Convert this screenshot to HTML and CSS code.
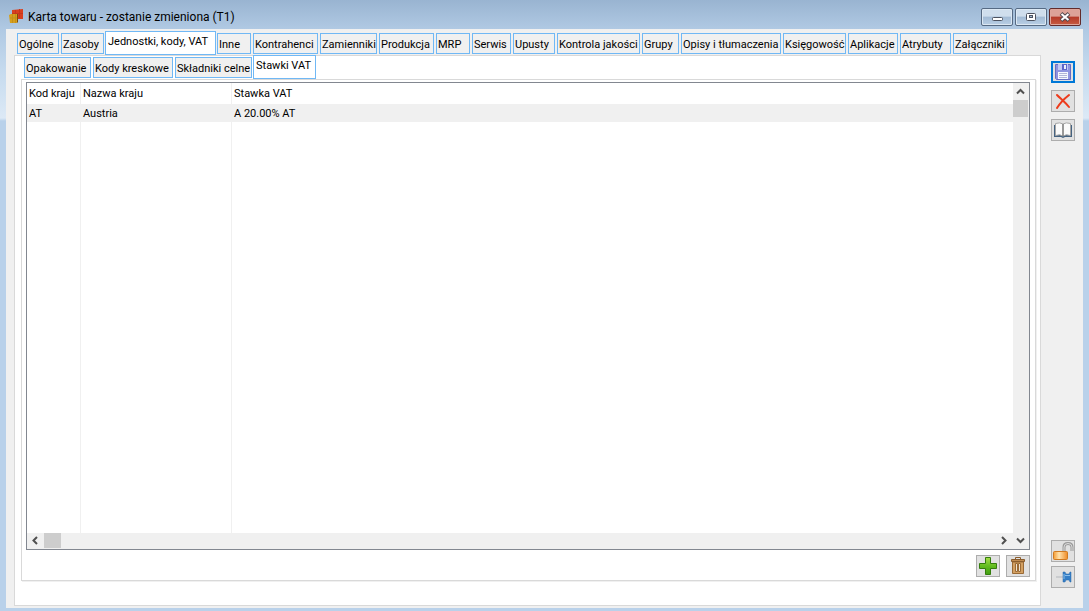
FILE: index.html
```html
<!DOCTYPE html>
<html lang="pl">
<head>
<meta charset="utf-8">
<title>Karta towaru</title>
<link rel="stylesheet" href="styles.css">
</head>
<body>
<div class="window">
  <header class="titlebar">
    <svg class="app-icon" width="16" height="16" viewBox="0 0 16 16" aria-hidden="true">
      <path d="M3 1l11-1v10H3z" fill="#d9401f"/>
      <path d="M3 4.500h11M6.500 1v8M10.500 0v9" stroke="#c5371c" fill="none"/>
      <path d="M0 6l2-1h7l-1 9H1z" fill="#d6a01d"/>
      <path d="M1 9h8M3.500 5v9M6.500 5v9" stroke="#c48f1a" fill="none"/>
      <path d="M8 5v9l1-1V5z" fill="#7d4c0b"/>
    </svg>
    <h1 class="title">Karta towaru - zostanie zmieniona (T1)</h1>
    <div class="caption-buttons">
      <button class="caption" type="button" aria-label="Minimalizuj">
        <svg width="12" height="12" viewBox="0 0 12 12"><rect x="1.500" y="6.500" width="10" height="3" rx="1" fill="#fff" stroke="#4c5260"/></svg>
      </button>
      <button class="caption" type="button" aria-label="Maksymalizuj">
        <svg width="12" height="12" viewBox="0 0 12 12"><rect x="1.500" y="2.500" width="9" height="7" rx="1" fill="#fff" stroke="#4c5260"/><rect x="4.500" y="4.500" width="3" height="2" fill="#9fb8d2" stroke="#4c5260"/></svg>
      </button>
      <button class="caption caption-close" type="button" aria-label="Zamknij">
        <svg width="12" height="12" viewBox="0 0 12 12"><path d="M2 2.500l8 7M10 2.500l-8 7" stroke="#54494f" stroke-width="4"/><path d="M2.500 3l7 6M9.500 3l-7 6" stroke="#fff" stroke-width="2"/></svg>
      </button>
    </div>
  </header>

  <main class="client">
    <div class="content">
      <nav class="tabs tabs-main" role="tablist">
        <button class="tab" type="button" role="tab">Ogólne</button>
        <button class="tab" type="button" role="tab">Zasoby</button>
        <button class="tab tab-active" type="button" role="tab" aria-selected="true">Jednostki, kody, VAT</button>
        <button class="tab" type="button" role="tab">Inne</button>
        <button class="tab" type="button" role="tab">Kontrahenci</button>
        <button class="tab" type="button" role="tab">Zamienniki</button>
        <button class="tab" type="button" role="tab">Produkcja</button>
        <button class="tab" type="button" role="tab">MRP</button>
        <button class="tab" type="button" role="tab">Serwis</button>
        <button class="tab" type="button" role="tab">Upusty</button>
        <button class="tab" type="button" role="tab">Kontrola jakości</button>
        <button class="tab" type="button" role="tab">Grupy</button>
        <button class="tab" type="button" role="tab">Opisy i tłumaczenia</button>
        <button class="tab" type="button" role="tab">Księgowość</button>
        <button class="tab" type="button" role="tab">Aplikacje</button>
        <button class="tab" type="button" role="tab">Atrybuty</button>
        <button class="tab" type="button" role="tab">Załączniki</button>
      </nav>
      <section class="page">
        <nav class="tabs tabs-sub" role="tablist">
          <button class="tab" type="button" role="tab">Opakowanie</button>
          <button class="tab" type="button" role="tab">Kody kreskowe</button>
          <button class="tab" type="button" role="tab">Składniki celne</button>
          <button class="tab tab-active" type="button" role="tab" aria-selected="true">Stawki VAT</button>
        </nav>
        <div class="subpage">
          <div class="list">
            <div class="list-view">
              <table class="rates">
                <colgroup><col class="col-code"><col class="col-name"><col></colgroup>
                <thead><tr><th>Kod kraju</th><th>Nazwa kraju</th><th>Stawka VAT</th></tr></thead>
                <tbody>
                  <tr class="selected"><td>AT</td><td>Austria</td><td>A 20.00% AT</td></tr>
                  <tr class="filler"><td></td><td></td><td></td></tr>
                </tbody>
              </table>
              <div class="scroll-x">
                <button class="arrow" type="button" aria-label="W lewo"><svg width="9" height="9" viewBox="0 0 9 9"><path d="M6 1L2.500 4.500 6 8"/></svg></button>
                <div class="thumb"></div>
                <button class="arrow arrow-end" type="button" aria-label="W prawo"><svg width="9" height="9" viewBox="0 0 9 9"><path d="M2 1l3.500 3.500L2 8"/></svg></button>
              </div>
            </div>
            <div class="scroll-y">
              <button class="arrow" type="button" aria-label="W górę"><svg width="9" height="9" viewBox="0 0 9 9"><path d="M1 6.500L4.500 3 8 6.500"/></svg></button>
              <div class="thumb"></div>
              <button class="arrow arrow-end" type="button" aria-label="W dół"><svg width="9" height="9" viewBox="0 0 9 9"><path d="M1 2.500L4.500 6 8 2.500"/></svg></button>
            </div>
          </div>
          <div class="list-actions">
            <button class="tool" type="button" aria-label="Dodaj">
              <svg width="20" height="20" viewBox="0 0 20 20">
                <defs><linearGradient id="plus" x2="0" y2="1"><stop stop-color="#a8df4b"/><stop offset=".5" stop-color="#63bd20"/><stop offset="1" stop-color="#419d13"/></linearGradient></defs>
                <path d="M7.500 1.500h5v6h6v5h-6v6h-5v-6h-6v-5h6z" fill="url(#plus)" stroke="#347d0d"/>
              </svg>
            </button>
            <button class="tool" type="button" aria-label="Usuń">
              <svg width="20" height="20" viewBox="0 0 20 20">
                <path d="M4.500 6v11.500h11V6z" fill="#d3a062" stroke="#9a6a35"/>
                <path d="M3.500 3.500h13v2h-13z" fill="#c18c50" stroke="#8a5d2e"/>
                <path d="M7.500 3V1.500h5V3" fill="none" stroke="#8a5d2e"/>
                <path d="M7.500 7.500h2v8h-2zM10.500 7.500h2v8h-2z" fill="#f0e3d0" stroke="#9a6a35"/>
              </svg>
            </button>
          </div>
        </div>
      </section>
    </div>

    <aside class="toolbar">
      <button class="tool tool-default" type="button" aria-label="Zapisz">
        <svg width="18" height="18" viewBox="0 0 18 18">
          <path d="M1.500 1.500h15v15h-14l-1-1z" fill="#8f93e0" stroke="#686cc4"/>
          <path d="M4 1h10v6H4z" fill="#c3c8f4"/><path d="M8 1h5v6H8z" fill="#5f66c8"/><path d="M10 2h2v4h-2z" fill="#eef0ff"/>
          <path d="M4 9h10v7H4z" fill="#f6f7ff"/><path d="M5 10.500h8M5 12.500h8M5 14.500h8" stroke="#b2b4d8"/>
        </svg>
      </button>
      <button class="tool" type="button" aria-label="Anuluj">
        <svg width="18" height="18" viewBox="0 0 18 18"><path d="M3 3c4 4 8 7 12 12M15 3C10 7 6 11 3 16" fill="none" stroke="#ed3b1c" stroke-width="2" stroke-linecap="round"/></svg>
      </button>
      <button class="tool" type="button" aria-label="Historia">
        <svg width="20" height="18" viewBox="0 0 20 18">
          <path d="M1 4v12h7l2 1 2-1h7V4z" fill="#456280"/>
          <path d="M2.500 2.500Q7 1 10 3v12q-3-2-7.500-.5zM17.500 2.500Q13 1 10 3v12q3-2 7.500-.5z" fill="#fafafa" stroke="#a5a5a5"/>
          <path d="M10 3v12" stroke="#777"/>
        </svg>
      </button>
      <div class="toolbar-bottom">
        <button class="tool" type="button" aria-label="Odblokuj">
          <svg width="22" height="20" viewBox="0 0 22 20">
            <defs><linearGradient id="lock"><stop stop-color="#f59c32"/><stop offset=".4" stop-color="#ffe3ae"/><stop offset="1" stop-color="#ef8b25"/></linearGradient></defs>
            <path d="M12 10V6q0-3.500 4-3.500t4 3.500v4" fill="none" stroke="#999" stroke-width="3"/>
            <path d="M12 10V6q0-3.500 4-3.500t4 3.500v4" fill="none" stroke="#ddd"/>
            <rect x="1.500" y="10.500" width="14" height="8" rx="1" fill="url(#lock)" stroke="#d07a20"/>
          </svg>
        </button>
        <button class="tool" type="button" aria-label="Przypnij">
          <svg width="20" height="18" viewBox="0 0 20 18">
            <path d="M3 9h7" stroke="#b3b7bc" stroke-width="1"/>
            <path d="M10 4h2l1 2h3l1-2h1v10h-1l-1-2h-3l-1 2h-2z" fill="#347ec6" stroke="#2868ab" stroke-width=".5"/>
            <path d="M12 7.500h5M11 6v5" stroke="#88bdea"/>
          </svg>
        </button>
      </div>
    </aside>
  </main>
</div>
</body>
</html>
```

FILE: styles.css
```css
* { box-sizing: border-box; }

body {
  margin: 0;
  font-family: Roboto, "Liberation Sans", sans-serif;
  font-size: 11px;
  line-height: 14px;
  color: #000;
}

button { font: inherit; color: inherit; margin: 0; padding: 0; }
svg { display: block; flex: none; }

.window {
  display: flex;
  flex-direction: column;
  min-height: 100vh;
  padding: 0 6px 3px;
  background: linear-gradient(#99b4d1 0, #b0c9e3 29px, #c5daee 70px, #dce9f6 118px, #b9d1ea 121px);
}

.titlebar {
  display: flex;
  align-items: center;
  height: 29px;
  padding: 5px 2px 0;
}
.app-icon { margin-left: 1px; }
.title {
  flex: 1;
  margin: 0 0 0 3px;
  font-size: 12px;
  font-weight: normal;
  line-height: 18px;
}
.caption-buttons { display: flex; gap: 2px; align-self: flex-start; margin-top: 3px; }
.caption {
  display: grid;
  place-items: center;
  width: 32px;
  height: 18px;
  border: 1px solid #566a83;
  border-radius: 2px;
  background: linear-gradient(#cfdeed 0 45%, #a2bbd5 50%, #b9cfe5);
  box-shadow: inset 0 0 0 1px #dce8f3;
}
.caption-close {
  border-color: #622b2b;
  background: linear-gradient(#dda297 0 45%, #b63a27 50%, #c65c43);
  box-shadow: inset 0 0 0 1px #dfa69b;
}

.client {
  flex: 1;
  display: flex;
  background: #f0f0f0;
}
.content {
  flex: 1;
  display: flex;
  flex-direction: column;
  min-width: 0;
  padding: 2px 0 2px 8px;
}

.tabs {
  display: grid;
  column-gap: 2px;
  align-items: start;
  height: 24px;
}
.tabs-main {
  grid-template-columns: 42px 43px 109px 34px 65px 57px 55px 34px 39px 42px 83px 37px 100px 63px 50px 51px 54px;
  padding-left: 3px;
}
.tabs-sub {
  grid-template-columns: 67px 80px 77px 61px;
  padding-left: 9px;
}
.tab {
  height: 21px;
  margin-top: 2px;
  padding: 2px 0 0 1px;
  border: 1px solid #70b8f5;
  background: #f0f0f0;
  text-align: left;
  white-space: nowrap;
}
.tab-active {
  height: 24px;
  margin: 0 -1px;
  padding: 0 0 2px 2px;
  background: #fff;
}

.page {
  flex: 1;
  display: flex;
  flex-direction: column;
  border: 1px solid #d9d9d9;
  background: #fff;
}
.page .tabs-sub { margin-top: -1px; }
.subpage {
  flex: 1;
  display: flex;
  flex-direction: column;
  margin: 0 4px 24px 6px;
  padding: 2px 5px 3px 4px;
  border: 1px solid #d9d9d9;
  box-shadow: 1px 1px 0 #f0f0f0;
}

.list {
  flex: 1;
  display: flex;
  border: 1px solid #828790;
}
.list-view { flex: 1; display: flex; flex-direction: column; }
.rates {
  flex: 1;
  width: 100%;
  table-layout: fixed;
  border-collapse: separate;
  border-spacing: 0;
}
.col-code { width: 54px; }
.col-name { width: 151px; }
.rates th,
.rates td {
  height: 18px;
  padding: 0 2px;
  border-right: 1px solid #f0f0f0;
  font-weight: normal;
  text-align: left;
  white-space: nowrap;
}
.rates th { height: 21px; }
.rates td { padding-top: 2px; }
.rates th:last-child,
.rates td:last-child { border-right: 0; }
.rates .selected { background: #f0f0f0; }
.rates .filler td { height: auto; }

.scroll-x,
.scroll-y { display: flex; background: #f0f0f0; }
.scroll-x { height: 16px; }
.scroll-y { flex-direction: column; width: 16px; }
.arrow {
  display: grid;
  place-items: center;
  width: 17px;
  height: 17px;
  border: 0;
  background: none;
}
.scroll-x .arrow { height: 15px; }
.scroll-y .arrow { width: 15px; }
.scroll-x .arrow-end { margin-left: auto; }
.scroll-y .arrow-end { margin-top: auto; }
.arrow path { fill: none; stroke: #505050; stroke-width: 2; }
.thumb { width: 17px; height: 17px; background: #cdcdcd; }
.scroll-x .thumb { height: 15px; }
.scroll-y .thumb { width: 15px; }

.list-actions {
  display: flex;
  justify-content: flex-end;
  gap: 6px;
  padding-top: 5px;
}
.tool {
  display: grid;
  place-items: center;
  width: 24px;
  height: 22px;
  border: 1px solid #adadad;
  background: #e1e1e1;
}
.tool-default { border: 2px solid #0078d7; }

.toolbar {
  display: flex;
  flex-direction: column;
  gap: 7px;
  padding: 32px 8px 20px 10px;
}
.toolbar-bottom {
  display: flex;
  flex-direction: column;
  gap: 4px;
  margin-top: auto;
}
```
